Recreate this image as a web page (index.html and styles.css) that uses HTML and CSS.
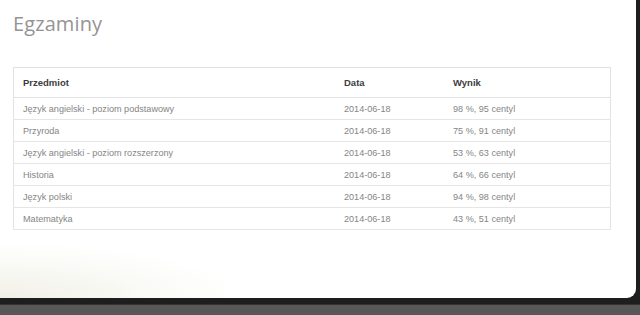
FILE: index.html
```html
<!DOCTYPE html>
<html lang="pl">
<head>
<meta charset="utf-8">
<link rel="stylesheet" href="styles.css">
</head>
<body>
<div class="frame">
  <div class="panel">
    <h1 class="title">Egzaminy</h1>
    <table class="exams">
      <thead>
        <tr><th class="c1">Przedmiot</th><th class="c2">Data</th><th class="c3">Wynik</th></tr>
      </thead>
      <tbody>
        <tr><td>Język angielski - poziom podstawowy</td><td>2014-06-18</td><td>98 %, 95 centyl</td></tr>
        <tr><td>Przyroda</td><td>2014-06-18</td><td>75 %, 91 centyl</td></tr>
        <tr><td>Język angielski - poziom rozszerzony</td><td>2014-06-18</td><td>53 %, 63 centyl</td></tr>
        <tr><td>Historia</td><td>2014-06-18</td><td>64 %, 66 centyl</td></tr>
        <tr><td>Język polski</td><td>2014-06-18</td><td>94 %, 98 centyl</td></tr>
        <tr><td>Matematyka</td><td>2014-06-18</td><td>43 %, 51 centyl</td></tr>
      </tbody>
    </table>
  </div>
</div>
</body>
</html>
```
FILE: styles.css
```css
html, body {
  margin: 0;
  padding: 0;
}
body {
  width: 640px;
  height: 315px;
  overflow: hidden;
  background: #585858;
  font-family: "Liberation Sans", Arial, sans-serif;
}
.frame {
  background: #1e1e1e;
  height: 305px;
  border-bottom: 1px solid #333;
  box-sizing: border-box;
}
.panel {
  width: 636px;
  height: 298px;
  box-sizing: border-box;
  background: radial-gradient(ellipse 240px 55px at 0 100%, #f1f0e7 0%, #f8f8f3 50%, #ffffff 100%);
  border-bottom-right-radius: 9px;
  padding: 11px 0 0 13px;
}
.title {
  margin: 0;
  font-family: "Open Sans", sans-serif;
  font-weight: 400;
  font-size: 20px;
  line-height: 26px;
  color: #949494;
  letter-spacing: 0.1px;
}
.exams {
  margin-top: 30px;
  width: 598px;
  border-collapse: collapse;
  border: 1px solid #e2e2e2;
  font-size: 9.1px;
}
.exams th {
  text-align: left;
  font-weight: bold;
  font-size: 9.5px;
  color: #3c3c3c;
  height: 29px;
  padding: 0 9px;
  border-bottom: 1px solid #e2e2e2;
}
.exams td {
  color: #858585;
  height: 21px;
  padding: 0 9px;
  border-bottom: 1px solid #e6e6e6;
}
.c1 { width: 303px; }
.c2 { width: 91px; }
```
